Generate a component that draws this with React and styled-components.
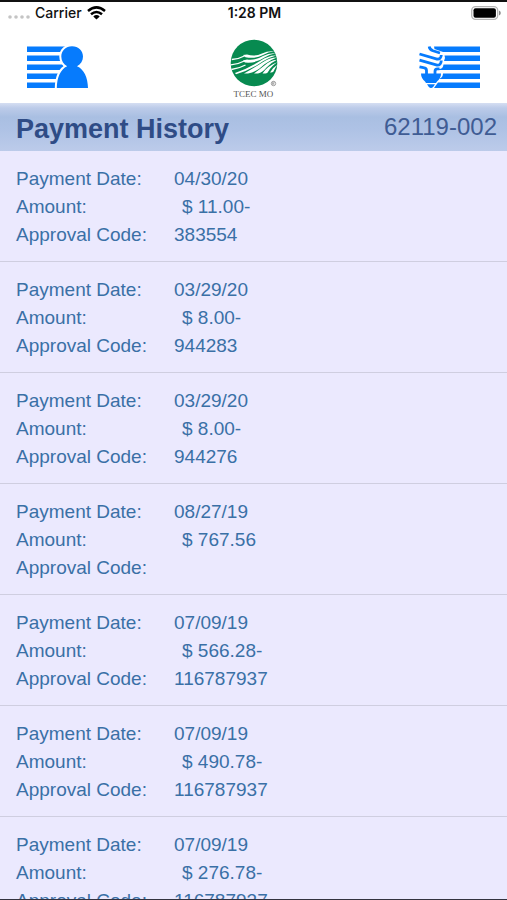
import React from 'react'
import styled, { createGlobalStyle } from 'styled-components'

const payments = [
  { date: '04/30/20', amount: '$ 11.00-', code: '383554' },
  { date: '03/29/20', amount: '$ 8.00-', code: '944283' },
  { date: '03/29/20', amount: '$ 8.00-', code: '944276' },
  { date: '08/27/19', amount: '$ 767.56', code: '' },
  { date: '07/09/19', amount: '$ 566.28-', code: '116787937' },
  { date: '07/09/19', amount: '$ 490.78-', code: '116787937' },
  { date: '07/09/19', amount: '$ 276.78-', code: '116787937' },
]

export default function App() {
  return (
    <>
      <GlobalStyle />
      <Screen>
        <StatusBar>
          <Carrier>
            <SignalDots />
            <span>Carrier</span>
            <WifiIcon />
          </Carrier>
          <Clock>1:28 PM</Clock>
          <Battery>
            <BatteryIcon />
          </Battery>
        </StatusBar>

        <NavBar>
          <NavButton type="button" aria-label="Accounts">
            <AccountIcon />
          </NavButton>
          <Brand>
            <BrandLogo />
            <BrandName>TCEC MO</BrandName>
          </Brand>
          <NavButton type="button" aria-label="Usage">
            <UsageIcon />
          </NavButton>
        </NavBar>

        <TitleBar>
          <Title>Payment History</Title>
          <AccountNumber>62119-002</AccountNumber>
        </TitleBar>

        <List>
          {payments.map((payment, i) => (
            <Item key={i}>
              <Details>
                <Label>Payment Date:</Label>
                <Value>{payment.date}</Value>
                <Label>Amount:</Label>
                <Value $indent>{payment.amount}</Value>
                <Label>Approval Code:</Label>
                <Value>{payment.code}</Value>
              </Details>
            </Item>
          ))}
        </List>
      </Screen>
    </>
  )
}

function SignalDots() {
  return (
    <svg width="22" height="6" viewBox="0 0 22 6" fill="#c4c4c4" aria-hidden="true">
      <circle cx="2" cy="4" r="1.8" />
      <circle cx="8" cy="4" r="1.8" />
      <circle cx="14" cy="4" r="1.8" />
      <circle cx="20" cy="4" r="1.8" />
    </svg>
  )
}

function WifiIcon() {
  return (
    <svg width="19" height="14" viewBox="0 0 19 14" fill="none" stroke="#000" strokeWidth="2.5" aria-hidden="true">
      <path d="M1 5 Q9.500 -2.200 18 5" />
      <path d="M4 8.300 Q9.500 3.600 15 8.300" />
      <path d="M9.500 13.600 L6.300 10.400 Q9.500 7.800 12.700 10.400 Z" fill="#000" stroke="none" />
    </svg>
  )
}

function BatteryIcon() {
  return (
    <svg width="30" height="14" viewBox="0 0 30 14" aria-hidden="true">
      <rect x="0.700" y="0.700" width="26" height="12.600" rx="3.800" fill="#fff" stroke="#b4b4b4" strokeWidth="1.300" />
      <rect x="2.500" y="2.300" width="22.400" height="9.400" rx="2" fill="#000" />
      <path d="M28 4.600 Q29.800 5.400 29.800 7 Q29.800 8.600 28 9.400 Z" fill="#8a8a8a" />
    </svg>
  )
}

function AccountIcon() {
  return (
    <svg width="61" height="43" viewBox="0 0 61 43" fill="#067bfd" aria-hidden="true">
      <rect x="0" y="0.500" width="40" height="5.500" />
      <rect x="0" y="9.500" width="40" height="5.500" />
      <rect x="0" y="18.500" width="42" height="5.500" />
      <rect x="0" y="27.500" width="40" height="5.500" />
      <rect x="0" y="36.500" width="36" height="5.500" />
      <g stroke="#fff" strokeWidth="4" paintOrder="stroke">
        <path d="M45 0.300 C51.500 0.300 56 4.800 56 10.500 C56 14.800 53.800 18.200 50 20.300 C57 23.300 60.800 31.500 61 42 H29.800 C30 31.500 33.500 23.300 40.200 20.300 C36.500 18.200 34.300 14.800 34.300 10.500 C34.300 4.800 38.800 0.300 45 0.300 Z" />
      </g>
    </svg>
  )
}

function UsageIcon() {
  return (
    <svg width="61" height="43" viewBox="0 0 61 43" fill="#067bfd" aria-hidden="true">
      <path d="M15 0.500 H61 V6 H24 L15.500 3 Z" />
      <path d="M25.500 9.500 H61 V15 H25 L26 12 Z" />
      <path d="M24.500 18.500 H61 V24 H20 V23 Q24 23 24.500 18.500 Z" />
      <path d="M24 27.500 H61 V33 H20 Q24 31.500 24 27.500 Z" />
      <path d="M19 36.500 H61 V42 H15 Z" />
      <g fill="none" stroke="#067bfd" strokeWidth="2.800">
        <path d="M10.200 0.500 Q10.500 3.500 14 4.800 L21 7" />
        <path d="M0.500 8 L18 13 Q22 13.500 22.300 9" />
        <path d="M0.500 14.200 L18 19.200 Q22 19.500 22.300 14.500" />
        <path d="M0.500 20.800 L4.500 21.600 Q7.500 22 7.500 24.500 V29" />
        <path d="M20.500 22.800 H18.500 Q16 22.800 16 25.500 V29" />
      </g>
      <path d="M2 27.500 H22 Q22 32 18 35.500 L17 37 H7 L6 35.500 Q2 32 2 27.500 Z" />
      <path d="M8 38.200 H16 L14.500 40.500 Q12 43.500 9.500 40.500 Z" />
    </svg>
  )
}

function BrandLogo() {
  return (
    <svg width="48" height="48" viewBox="0 0 48 48" aria-hidden="true">
      <circle cx="24" cy="24" r="23.300" fill="#078a50" />
      {/* power lines on the left */}
      <g fill="none" stroke="#fff" strokeWidth="1.300">
        <path d="M1.800 20.500 Q9 20 15.500 16.500" />
        <path d="M0.800 25.800 Q9 25 15.500 21.500" />
        <path d="M1.500 30.500 Q9 29.500 15.500 26" />
      </g>
      {/* field rows sweeping up to the right */}
      <g fill="#fff">
        <path d="M13 16 L17 15.500 Q25 18 32 14.500 Q38 11.500 44.500 12.300 Q38 13 33 16 Q26 20 15.500 18.200 Z" />
        <path d="M13 21.500 L17 20.500 Q26 21.500 33 17 Q39 13.800 45.500 14.300 Q39 15.500 34 18.800 Q26 24.500 15 23.500 Z" />
        <path d="M5 34 Q19 29 30 22 Q39 16 46.300 16.500 Q39 18.500 33 22.300 Q20 31.500 6 35.200 Z" />
        <path d="M14 34.500 Q24 29 32 23.800 Q39.500 18.500 46.800 18.500 Q40 21 34.500 25.200 Q26 33.500 18 34.600 Z" />
        <path d="M24 34.600 Q30 30 34.500 26.500 Q40 21.500 47 20.800 Q40.500 24 36.500 28.500 Q32.500 33.500 28 34.600 Z" />
        <path d="M32.500 34.600 Q37 27 47.200 23.200 Q41 27.500 39 31.500 Q37.500 34.500 35.500 34.600 Z" />
        <path d="M40 33.500 Q42.500 28.500 47.200 26 Q44.800 29.500 43.500 32.500 Q42.500 33.800 40 33.500 Z" />
      </g>
      <circle cx="43.500" cy="44.500" r="2.200" fill="#fff" stroke="#777" strokeWidth="0.700" />
      <path d="M42.700 45.900 V43.200 H43.700 Q44.500 43.300 44.200 44.300 L42.700 44.600 L44.400 45.900" fill="none" stroke="#777" strokeWidth="0.500" />
    </svg>
  )
}

const GlobalStyle = createGlobalStyle`
  * {
    box-sizing: border-box;
  }
  body {
    margin: 0;
    background: #ebe9fe;
    font-family: 'Liberation Sans', Arial, sans-serif;
  }
`

const Screen = styled.div`
  display: flex;
  flex-direction: column;
  height: 100vh;
  overflow: hidden;
  border-top: 2px solid #111;
  border-bottom: 1px solid #33333f;
`

const StatusBar = styled.div`
  display: grid;
  grid-template-columns: 1fr auto 1fr;
  align-items: center;
  flex: none;
  height: 21px;
  padding: 0 6px 0 8px;
  background: #fff;
  color: #111;
  font-family: Inter, sans-serif;
  font-size: 14px;
  font-weight: 500;
`

const Carrier = styled.div`
  display: flex;
  align-items: center;
  gap: 5px;

  svg:first-child {
    margin-top: 6px;
  }
`

const Clock = styled.span`
  font-weight: 600;
`

const Battery = styled.div`
  display: flex;
  justify-content: flex-end;
`

const NavBar = styled.header`
  display: flex;
  justify-content: space-between;
  align-items: center;
  flex: none;
  height: 80px;
  padding: 8px 27px 0;
  background: #fff;
`

const NavButton = styled.button`
  display: flex;
  padding: 0;
  border: 0;
  background: none;
  cursor: pointer;
`

const Brand = styled.div`
  display: flex;
  flex-direction: column;
  align-items: center;
  padding-top: 6px;
`

const BrandName = styled.span`
  color: #555;
  font-family: 'Liberation Serif', 'Times New Roman', serif;
  font-size: 9px;
  line-height: 15px;
`

const TitleBar = styled.div`
  display: flex;
  justify-content: space-between;
  flex: none;
  height: 48px;
  padding: 0 10px 0 16px;
  background: linear-gradient(#d5def2 0, #bccbe9 5px, #a9bfe2 14px, #aec2e5 26px, #bccbea 48px);
`

const Title = styled.h1`
  margin: 0;
  color: #2f4c86;
  font-size: 27px;
  font-weight: 700;
  line-height: 52px;
`

const AccountNumber = styled.span`
  color: #3f5c94;
  font-size: 24px;
  line-height: 48px;
`

const List = styled.ul`
  flex: 1;
  min-height: 0;
  overflow: hidden;
  margin: 0;
  padding: 0;
  background: #ebe9fe;
  list-style: none;
`

const Item = styled.li`
  padding: 14px 16px 12px;
  border-bottom: 1px solid #cfcee0;
`

const Details = styled.dl`
  display: grid;
  grid-template-columns: 158px 1fr;
  grid-auto-rows: 28px;
  margin: 0;
  color: #3a70a6;
  font-size: 19px;
  line-height: 28px;
`

const Label = styled.dt``

const Value = styled.dd`
  margin: 0;
  padding-left: ${(props) => (props.$indent ? '8px' : '0')};
`
